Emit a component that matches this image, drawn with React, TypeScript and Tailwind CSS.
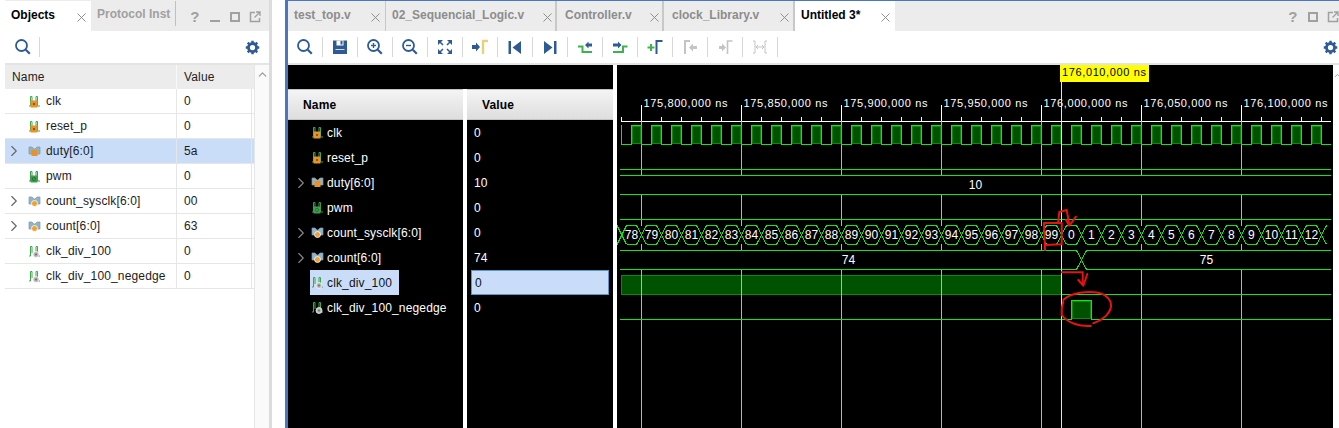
import React from 'react';
import { X, ChevronRight, ChevronUp } from 'lucide-react';

const NAVY = '#2f5b94';
const GREEN = '#3cb44a';
const WAVE = '#12e612';

type Kind = 'in' | 'busIn' | 'out' | 'busLocal' | 'local';

interface Sig {
  name: string;
  kind: Kind;
  left: string;
  right: string;
  expand?: boolean;
}

const signals: Sig[] = [
  { name: 'clk', kind: 'in', left: '0', right: '0' },
  { name: 'reset_p', kind: 'in', left: '0', right: '0' },
  { name: 'duty[6:0]', kind: 'busIn', left: '5a', right: '10', expand: true },
  { name: 'pwm', kind: 'out', left: '0', right: '0' },
  { name: 'count_sysclk[6:0]', kind: 'busLocal', left: '00', right: '0', expand: true },
  { name: 'count[6:0]', kind: 'busLocal', left: '63', right: '74', expand: true },
  { name: 'clk_div_100', kind: 'local', left: '0', right: '0' },
  { name: 'clk_div_100_negedge', kind: 'local', left: '0', right: '0' },
];

function SignalIcon({ kind }: { kind: Kind }) {
  if (kind === 'busIn' || kind === 'busLocal') {
    const dot = kind === 'busLocal';
    return (
      <svg width="13" height="13" viewBox="0 0 13 13" className="shrink-0">
        <path d="M1 2h3l2 2h1l2-2h3v7H1z" fill={dot ? '#8fb4cc' : '#9ab0b4'} stroke="#7f9aa8" strokeWidth="0.7" />
        {dot ? (
          <circle cx="6.5" cy="8.5" r="3" fill="#f0a030" stroke="#fff" strokeWidth="0.8" />
        ) : (
          <rect x="3.5" y="5" width="6" height="6" fill="#e8922c" />
        )}
      </svg>
    );
  }
  return (
    <svg width="13" height="13" viewBox="0 0 13 13" className="shrink-0">
      <path d="M1 11h1.5V1.5h1.5V8M8 8V1.5h1.5V11H12" fill="none" stroke={kind === 'out' ? '#3a9a48' : '#3bab4a'} strokeWidth="1" />
      {kind === 'in' && <rect x="2.5" y="5.5" width="7" height="7" fill="#e8922c" />}
      {kind === 'in' && <rect x="5" y="8" width="2" height="2" fill="#8a5a1c" />}
      {kind === 'out' && <rect x="2.5" y="5.5" width="7" height="7" fill="#3f9e50" />}
      {kind === 'out' && <circle cx="6" cy="9" r="1.6" fill="none" stroke="#1f6a2c" strokeWidth="0.8" />}
      {kind === 'local' && <circle cx="8" cy="9.5" r="3" fill="#b8b8b8" stroke="#fff" strokeWidth="0.7" />}
      {kind === 'local' && <circle cx="8" cy="9.5" r="0.9" fill="#666" />}
    </svg>
  );
}

function Gear({ size = 15 }: { size?: number }) {
  return (
    <svg width={size} height={size} viewBox="0 0 16 16">
      <circle cx="8" cy="8" r="4.3" fill="none" stroke={NAVY} strokeWidth="3" />
      <path d="M8 0.8v3M8 12.2v3M0.8 8h3M12.2 8h3M2.9 2.9l2.1 2.1M11 11l2.1 2.1M2.9 13.1L5 11M11 5l2.1-2.1" stroke={NAVY} strokeWidth="2.6" />
    </svg>
  );
}

function Lens({ mark }: { mark?: 'plus' | 'minus' }) {
  return (
    <svg width="18" height="18" viewBox="0 0 18 18">
      <circle cx="7.5" cy="7.5" r="5.5" fill="none" stroke={NAVY} strokeWidth="1.8" />
      <path d="M11.8 11.8l4 4" stroke={NAVY} strokeWidth="2.2" />
      {mark && <path d="M5 7.5h5" stroke={NAVY} strokeWidth="1.4" />}
      {mark === 'plus' && <path d="M7.5 5v5" stroke={NAVY} strokeWidth="1.4" />}
    </svg>
  );
}

const toolIcons: React.ReactNode[] = [
  <Lens key="s" />,
  <svg key="save" width="16" height="16" viewBox="0 0 16 16">
    <path d="M1 1.5h14v13.500H1z" fill={NAVY} />
    <path d="M4.500 1.500h7v5h-7z" fill="#fff" />
    <path d="M8.500 2h2v3.500h-2z" fill={NAVY} />
    <path d="M3.500 10h9v.8h-9z" fill="#fff" />
  </svg>,
  <Lens key="zi" mark="plus" />,
  <Lens key="zo" mark="minus" />,
  <svg key="fit" width="16" height="16" viewBox="0 0 16 16" fill={NAVY}>
    <path d="M1 1h5L1 6zM15 1v5l-5-5zM1 15v-5l5 5zM15 15h-5l5-5z" />
    <path d="M3 3l3 3M13 3l-3 3M3 13l3-3M13 13l-3-3" stroke={NAVY} strokeWidth="1.5" />
  </svg>,
  <svg key="cur" width="18" height="16" viewBox="0 0 18 16">
    <path d="M1 6h4V3.500L9 8l-4 4.500V10H1z" fill={NAVY} />
    <path d="M12 15V2h5" fill="none" stroke="#e6d27a" strokeWidth="2.4" />
  </svg>,
  <svg key="first" width="14" height="15" viewBox="0 0 14 15" fill={NAVY}>
    <path d="M0.500 1h2.500v13H0.500zM13 1v13L4.500 7.500z" />
  </svg>,
  <svg key="last" width="14" height="15" viewBox="0 0 14 15" fill={NAVY}>
    <path d="M11 1h2.500v13H11zM1 1v13L9.500 7.500z" />
  </svg>,
  <svg key="prev" width="16" height="16" viewBox="0 0 16 16">
    <path d="M1 7.500H5.500V13H15" fill="none" stroke={GREEN} strokeWidth="2" />
    <path d="M15 4.500H11.500V2.500L8 6l3.500 3.500V7.500H15z" fill={NAVY} />
  </svg>,
  <svg key="next" width="16" height="16" viewBox="0 0 16 16">
    <path d="M1 13H11V7.500H15.500" fill="none" stroke={GREEN} strokeWidth="2" />
    <path d="M1 4.500H6V2.500L9.500 6 6 9.500V7.500H1z" fill={NAVY} />
  </svg>,
  <svg key="add" width="16" height="16" viewBox="0 0 16 16">
    <path d="M0.500 8.500h7M4 5v7" stroke={GREEN} strokeWidth="2" />
    <path d="M9.500 15V2h6" fill="none" stroke={NAVY} strokeWidth="2" />
  </svg>,
  <svg key="dprev" width="15" height="16" viewBox="0 0 15 16">
    <path d="M2 15V2h5" fill="none" stroke="#c4c4c4" strokeWidth="2" />
    <path d="M14 7h-4V4.500L6 8.500l4 4V10h4z" fill="#c4c4c4" />
  </svg>,
  <svg key="dnext" width="15" height="16" viewBox="0 0 15 16">
    <path d="M9.500 15V2h5" fill="none" stroke="#c4c4c4" strokeWidth="1.600" />
    <path d="M1 7h3V4.500l4 4-4 4V10H1z" fill="#c4c4c4" />
  </svg>,
  <svg key="dspan" width="16" height="14" viewBox="0 0 16 14">
    <path d="M1 1h2v12H1M15 1h-2v12h2M4 7h8M4 7l2-2M4 7l2 2M12 7l-2-2M12 7l-2 2" fill="none" stroke="#c4c4c4" strokeWidth="1" />
  </svg>,
];

function PanelIcons({ minimize }: { minimize?: boolean }) {
  return (
    <div className="flex items-center text-[#a0a0a0]">
      <span className="w-[20px] text-center text-[15px] font-bold leading-none">?</span>
      {minimize && (
        <div className="w-[20px] flex justify-center pt-[9px]">
          <div className="w-[10px] h-[2px] bg-[#a0a0a0]" />
        </div>
      )}
      <div className="w-[20px] flex justify-center">
        <div className="w-[10px] h-[10px] border-2 border-[#a0a0a0]" />
      </div>
      <svg width="20" height="12" viewBox="0 0 20 12">
        <path d="M10 1.500H5.500v9h9V7" fill="none" stroke="#a0a0a0" strokeWidth="1.500" />
        <path d="M9.500 6.500l5-5M11 1h4v4" fill="none" stroke="#a0a0a0" strokeWidth="1.300" />
      </svg>
    </div>
  );
}

function EditorTab({ label, className }: { label: string; className: string }) {
  return (
    <div className={`h-[30px] flex items-center text-[12px] font-bold tracking-normal shrink-0 ${className}`}>
      <span className="pb-[2px]">{label}</span>
      <X size={15} strokeWidth={1.5} className="ml-auto mt-[3px] text-[#8a8a8a]" />
    </div>
  );
}

const grids = [641.5, 741.5, 841.5, 941.5, 1041.5, 1141.5, 1241.5];
const rulerLabels = ['175,800,000 ns', '175,850,000 ns', '175,900,000 ns', '175,950,000 ns', '176,000,000 ns', '176,050,000 ns', '176,100,000 ns'];
const minorTicks = Array.from({ length: 36 }, (_, i) => 621.5 + i * 20).filter((x) => !grids.includes(x));
const crossings = Array.from({ length: 36 }, (_, i) => 621.5 + i * 20);
const busValues = crossings.slice(0, 35).map((x, i) => {
  const v = 78 + i;
  return { x: x + 10, label: String(v >= 100 ? v - 100 + 0 : v) };
});

function Waveform() {
  let clock = 'M620.500 125.500H621.500V144.500';
  const pulses: number[] = [];
  for (let x = 631.5; x < 1320; x += 20) {
    pulses.push(x);
    clock += `H${x}V125.500H${x + 10}V144.500`;
  }
  clock += 'H1331';

  let hex = '';
  for (const x of crossings) {
    const l = Math.max(x - 5, 617);
    const r = Math.min(x + 5, 1331);
    hex += `M${l} 225.500L${r} 244.500M${l} 244.500L${r} 225.500`;
    if (x + 15 <= 1331) hex += `M${x + 5} 225.500H${x + 15}M${x + 5} 244.500H${x + 15}`;
  }

  return (
    <svg width="716" height="363" viewBox="617 65 716 363" className="block shrink-0" fontFamily="'Liberation Sans', sans-serif">
      <rect x="617" y="65" width="716" height="363" fill="#000" />

      {/* ruler */}
      <g shapeRendering="crispEdges" stroke="#fff">
        <path d="M621 121.500H1331" />
        {minorTicks.map((x) => (
          <path key={x} d={`M${x} 117V121`} />
        ))}
        {grids.map((x) => (
          <path key={x} d={`M${x} 105V121`} />
        ))}
      </g>
      {grids.map((x, i) => (
        <text key={x} x={x + 2} y={107} fill="#fff" fontSize="11" letterSpacing="0.62">
          {rulerLabels[i]}
        </text>
      ))}

      {/* single bit signals */}
      <g fill="#005200" stroke="#0a8a0a" shapeRendering="crispEdges">
        {pulses.map((x) => (
          <rect key={x} x={x + 1} y={126.5} width={8} height={17} />
        ))}
        <rect x="621.500" y="275.500" width="440" height="19" />
        <rect x="1072.500" y="301.500" width="18" height="17" />
      </g>

      {/* grid */}
      <g stroke="#b4b4b4" shapeRendering="crispEdges">
        {grids.map((x) => (
          <path key={x} d={`M${x} 121V428`} />
        ))}
      </g>

      <g fill="none" stroke={WAVE} shapeRendering="crispEdges">
        <path d={clock} strokeWidth="1" />
        <path d="M620 169.500H1331" />
        <path d="M620 219.500H1331" />
        <path d="M1061.500 294.500H1331" />
        <path d="M620 319.500H1071.500V300.500H1091.500V319.500H1331" />
      </g>

      {/* buses hide the grid */}
      <g fill="#000">
        <rect x="618" y="176" width="715" height="18" />
        <rect x="618" y="226" width="715" height="18" />
        <rect x="618" y="251" width="715" height="18" />
      </g>
      <g fill="none" stroke={WAVE} strokeWidth="1" shapeRendering="crispEdges">
        <path d="M620 175.500H1331M620 194.500H1331" />
        <path d={hex} />
        <path d="M620 250.500H1076.500L1086.500 269.500H1331M620 269.500H1076.500L1086.500 250.500H1331" />
      </g>
      <g fill="#fff" fontSize="12" textAnchor="middle">
        <text x="975.500" y="189">10</text>
        {busValues.map((b) => (
          <text key={b.x} x={b.x} y={239}>
            {b.label}
          </text>
        ))}
        <text x="848.500" y="264">74</text>
        <text x="1206.500" y="264">75</text>
      </g>

      {/* cursor */}
      <path d="M1061.500 81V428" stroke="#ffff00" shapeRendering="crispEdges" />
      <rect x="1060" y="65" width="89" height="17" fill="#ffff00" />
      <text x="1062" y="76" fill="#000" fontSize="11" letterSpacing="0.62">176,010,000 ns</text>

      {/* hand drawn marks */}
      <g fill="none" stroke="#e81212" strokeWidth="2" strokeLinejoin="round" strokeLinecap="round">
        <path d="M1045 250L1044 223H1061.700V244.300L1045 245" />
        <path d="M1058 223L1059.300 212L1066.700 210L1069 223" />
        <path d="M1066 220L1069.300 225.700L1076 216.700" />
        <path d="M1061.700 272.300H1082.700V283.300" />
        <path d="M1078.300 280L1083.300 285.700L1087.300 274" />
        <path d="M1063.300 300Q1068 295 1080 292.700Q1090 291.500 1098.300 292.700Q1105 294 1108.300 298.300Q1111.500 302 1111 306.700Q1110 312 1105 316.700Q1100 321 1093.300 323.300" />
        <path d="M1090.700 326Q1082 326.500 1075 324Q1066 321 1061.700 315Q1061 308 1063.300 301.700" />
      </g>
    </svg>
  );
}

function Header({ label }: { label: string }) {
  return (
    <div className="h-[31px] flex items-center pl-[15px] text-[12px] font-bold text-black bg-gradient-to-b from-[#f4f4f4] to-[#dedede] border-y border-[#c4c4c4]">
      {label}
    </div>
  );
}

export default function App() {
  return (
    <div className="flex w-[1339px] h-[428px] overflow-hidden bg-white text-[12px] tracking-[0.15px] font-['Liberation_Sans',Arial,sans-serif]">
      {/* Objects panel */}
      <div className="w-[272px] h-full pl-[5px] border-r-[3px] border-[#dcdcdc] flex flex-col shrink-0">
        <div className="h-[31px] bg-[#ececec] flex shrink-0">
          <div className="w-[86px] h-[30px] mt-[1px] bg-white flex items-center pl-[6px] pr-[2px] font-bold tracking-normal text-black">
            <span className="pb-[3px]">Objects</span>
            <X size={15} strokeWidth={1.5} className="ml-auto mt-[3px] text-[#8a8a8a]" />
          </div>
          <div className="w-[85px] h-[25px] mt-[1px] pl-[6px] border-r border-[#c0c0c0] flex items-center font-bold tracking-normal text-[#a0a0a0]">
            Protocol Inst
          </div>
          <div className="ml-auto pt-[9px] pr-[4px] self-start">
            <PanelIcons minimize />
          </div>
        </div>
        <div className="h-[32px] bg-white flex items-center pl-[9px] pr-[9px] shrink-0">
          <Lens />
          <div className="w-px h-[20px] bg-[#d8d8d8] ml-[7px]" />
          <div className="ml-auto">
            <Gear />
          </div>
        </div>
        <div className="h-[2px] bg-[#e4e4e4] shrink-0" />
        <div className="flex-1 flex min-h-0">
          <div className="w-[250px] border-r border-[#e6e6e6] shrink-0">
            <div className="h-[24px] flex bg-[#ececec] text-[#222]">
              <div className="w-[172px] pl-[7px] flex items-center border-r border-[#f8f8f8]">Name</div>
              <div className="flex-1 pl-[7px] flex items-center">Value</div>
            </div>
            {signals.map((s) => (
              <div
                key={s.name}
                className={`h-[25px] flex border-b border-[#e6e6e6] text-[#1c1c1c] ${s.name === 'duty[6:0]' ? 'bg-[#c9ddf9]' : 'bg-white'}`}
              >
                <div className="w-[172px] flex items-center border-r border-[#e6e6e6] shrink-0">
                  <div className="w-[23px] shrink-0">
                    {s.expand && <ChevronRight size={18} strokeWidth={1.5} className="text-[#666]" />}
                  </div>
                  <SignalIcon kind={s.kind} />
                  <span className="ml-[5px] whitespace-nowrap">{s.name}</span>
                </div>
                <div className="w-[75px] pl-[7px] flex items-center border-r border-[#e6e6e6]">{s.left}</div>
              </div>
            ))}
          </div>
          <div className="flex-1 bg-[#fafafa] flex justify-center pt-[3px]">
            <ChevronUp size={13} strokeWidth={2.2} className="text-[#999]" />
          </div>
        </div>
      </div>

      <div className="w-[13px] shrink-0" />

      {/* Waveform panel */}
      <div className="flex-1 min-w-0 h-full border-l-[3px] border-t border-[#4a76c6] flex flex-col">
        <div className="h-[30px] bg-[#ececec] flex shrink-0">
          <EditorTab label="test_top.v" className="w-[98px] pl-[6px] pr-[2px] text-[#8c8c8c] border-r border-[#c8c8c8]" />
          <EditorTab label="02_Sequencial_Logic.v" className="w-[171px] pl-[6px] text-[#8c8c8c] border-r-2 border-[#c8c8c8]" />
          <EditorTab label="Controller.v" className="w-[107px] pl-[8px] text-[#8c8c8c] border-r-2 border-[#c8c8c8]" />
          <EditorTab label="clock_Library.v" className="w-[131px] pl-[8px] pr-[1px] text-[#8c8c8c] border-r-2 border-[#c8c8c8]" />
          <EditorTab label="Untitled 3*" className="w-[100px] pl-[6px] pr-[2px] bg-white text-black" />
          <div className="ml-auto pt-[8px] self-start -mr-[4px]">
            <PanelIcons />
          </div>
        </div>
        <div className="h-[32px] bg-white flex items-center shrink-0">
          {toolIcons.map((icon, i) => (
            <div key={i} className="w-[35px] h-[20px] flex items-center justify-center border-r border-[#d8d8d8] shrink-0">
              {icon}
            </div>
          ))}
          <div className="ml-auto pr-[1px]">
            <Gear />
          </div>
        </div>
        <div className="h-[2px] bg-[#e4e4e4] shrink-0" />
        <div className="flex-1 flex min-h-0 bg-white">
          <div className="w-[325px] bg-black shrink-0 flex flex-col">
            <div className="h-[24px] shrink-0" />
            <div className="flex flex-1 min-h-0">
              <div className="w-[175px] shrink-0">
                <Header label="Name" />
                {signals.map((s) => {
                  const selected = s.name === 'clk_div_100';
                  return (
                    <div key={s.name} className="h-[25px] flex items-center text-white">
                      <div className="w-[22px] pl-[4px] shrink-0">
                        {s.expand && <ChevronRight size={18} strokeWidth={1.5} className="text-[#888]" />}
                      </div>
                      <div className={`h-[25px] flex items-center pl-px pr-[7px] ${selected ? 'bg-[#c9ddf9] text-[#111]' : ''}`}>
                        <SignalIcon kind={s.kind} />
                        <span className="ml-[3px] whitespace-nowrap">{s.name}</span>
                      </div>
                    </div>
                  );
                })}
              </div>
              <div className="w-[4px] bg-white shrink-0" />
              <div className="flex-1">
                <Header label="Value" />
                {signals.map((s) => (
                  <div key={s.name} className="h-[25px] flex items-center text-white">
                    {s.name === 'clk_div_100' ? (
                      <div className="mx-[4px] flex-1 h-[25px] pl-[3px] flex items-center bg-[#c9ddf9] border border-[#5a96cf] text-[#111]">
                        {s.right}
                      </div>
                    ) : (
                      <span className="pl-[7px]">{s.right}</span>
                    )}
                  </div>
                ))}
              </div>
            </div>
          </div>
          <div className="w-[4px] shrink-0" />
          <Waveform />
          <div className="flex-1 flex justify-start pt-[6px]">
            <ChevronUp size={9} strokeWidth={2} className="text-[#888]" />
          </div>
        </div>
      </div>
    </div>
  );
}
